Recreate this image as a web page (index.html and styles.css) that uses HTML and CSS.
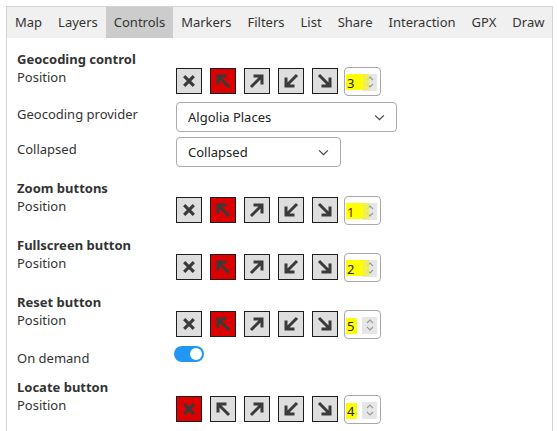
FILE: index.html
```html
<!DOCTYPE html>
<html lang="en">
<head>
<meta charset="utf-8">
<title>Map settings - Controls</title>
<link rel="stylesheet" href="styles.css">
</head>
<body>
<svg class="defs" width="0" height="0">
    <symbol id="i-none" viewBox="0 0 16 16"><path d="M2.5 2.5l11 11M13.5 2.5l-11 11"/></symbol>
    <symbol id="i-tl" viewBox="0 0 16 16"><path d="M3 11.5V3h8.5M3 3l11 11"/></symbol>
    <symbol id="i-tr" viewBox="0 0 16 16"><path d="M4.5 3H13v8.5M13 3L2 14"/></symbol>
    <symbol id="i-bl" viewBox="0 0 16 16"><path d="M3 4.5V13h8.5M3 13L14 2"/></symbol>
    <symbol id="i-br" viewBox="0 0 16 16"><path d="M13 4.5V13H4.5M13 13L2 2"/></symbol>
    <symbol id="i-spin" viewBox="0 0 10 16"><path d="M2 6l3-3 3 3M2 10l3 3 3-3"/></symbol>
    <symbol id="i-caret" viewBox="0 0 12 8"><path d="M1 1.5l5 5 5-5"/></symbol>
</svg>

<div class="tabs">
    <nav class="tab-bar">
        <a href="#">Map</a>
        <a href="#">Layers</a>
        <a href="#" class="active">Controls</a>
        <a href="#">Markers</a>
        <a href="#">Filters</a>
        <a href="#">List</a>
        <a href="#">Share</a>
        <a href="#">Interaction</a>
        <a href="#">GPX</a>
        <a href="#">Draw</a>
    </nav>

    <div class="panel">
        <div class="group first">
            <div class="group-title">Geocoding control</div>
            <div class="row">
                <span class="label">Position</span>
                <div class="pos">
                    <button class="pos-btn"><svg class="x"><use href="#i-none"/></svg></button>
                    <button class="pos-btn on"><svg><use href="#i-tl"/></svg></button>
                    <button class="pos-btn"><svg><use href="#i-tr"/></svg></button>
                    <button class="pos-btn"><svg><use href="#i-bl"/></svg></button>
                    <button class="pos-btn"><svg><use href="#i-br"/></svg></button>
                    <div class="num wide"><span class="mark"></span><span class="val">3</span><span class="spin"><svg><use href="#i-spin"/></svg></span></div>
                </div>
            </div>
        </div>

        <div class="row select-row">
            <span class="label">Geocoding provider</span>
            <div class="select big">Algolia Places <svg><use href="#i-caret"/></svg></div>
        </div>
        <div class="row select-row">
            <span class="label">Collapsed</span>
            <div class="select small">Collapsed <svg><use href="#i-caret"/></svg></div>
        </div>

        <div class="group">
            <div class="group-title">Zoom buttons</div>
            <div class="row">
                <span class="label">Position</span>
                <div class="pos">
                    <button class="pos-btn"><svg class="x"><use href="#i-none"/></svg></button>
                    <button class="pos-btn on"><svg><use href="#i-tl"/></svg></button>
                    <button class="pos-btn"><svg><use href="#i-tr"/></svg></button>
                    <button class="pos-btn"><svg><use href="#i-bl"/></svg></button>
                    <button class="pos-btn"><svg><use href="#i-br"/></svg></button>
                    <div class="num wide"><span class="mark"></span><span class="val red">1</span><span class="spin"><svg><use href="#i-spin"/></svg></span></div>
                </div>
            </div>
        </div>

        <div class="group">
            <div class="group-title">Fullscreen button</div>
            <div class="row">
                <span class="label">Position</span>
                <div class="pos">
                    <button class="pos-btn"><svg class="x"><use href="#i-none"/></svg></button>
                    <button class="pos-btn on"><svg><use href="#i-tl"/></svg></button>
                    <button class="pos-btn"><svg><use href="#i-tr"/></svg></button>
                    <button class="pos-btn"><svg><use href="#i-bl"/></svg></button>
                    <button class="pos-btn"><svg><use href="#i-br"/></svg></button>
                    <div class="num wide"><span class="mark"></span><span class="val">2</span><span class="spin"><svg><use href="#i-spin"/></svg></span></div>
                </div>
            </div>
        </div>

        <div class="group">
            <div class="group-title">Reset button</div>
            <div class="row">
                <span class="label">Position</span>
                <div class="pos">
                    <button class="pos-btn"><svg class="x"><use href="#i-none"/></svg></button>
                    <button class="pos-btn on"><svg><use href="#i-tl"/></svg></button>
                    <button class="pos-btn"><svg><use href="#i-tr"/></svg></button>
                    <button class="pos-btn"><svg><use href="#i-bl"/></svg></button>
                    <button class="pos-btn"><svg><use href="#i-br"/></svg></button>
                    <div class="num"><span class="mark"></span><span class="val">5</span><span class="spin"><svg><use href="#i-spin"/></svg></span></div>
                </div>
            </div>
        </div>

        <div class="row toggle-row">
            <span class="label">On demand</span>
            <span class="toggle"><span class="knob"></span></span>
        </div>

        <div class="group">
            <div class="group-title">Locate button</div>
            <div class="row">
                <span class="label">Position</span>
                <div class="pos">
                    <button class="pos-btn on"><svg class="x"><use href="#i-none"/></svg></button>
                    <button class="pos-btn"><svg><use href="#i-tl"/></svg></button>
                    <button class="pos-btn"><svg><use href="#i-tr"/></svg></button>
                    <button class="pos-btn"><svg><use href="#i-bl"/></svg></button>
                    <button class="pos-btn"><svg><use href="#i-br"/></svg></button>
                    <div class="num"><span class="mark"></span><span class="val">4</span><span class="spin"><svg><use href="#i-spin"/></svg></span></div>
                </div>
            </div>
        </div>
    </div>
</div>
</body>
</html>
```

FILE: styles.css
```css
body {
    margin: 0;
    font-family: "Noto Sans", "Open Sans", sans-serif;
    font-size: 13px;
    color: #333;
    background: #fff;
}
.defs {
    position: absolute;
}
.tabs {
    margin: 6px 0 0 6px;
    width: 545px;
    height: 440px;
    border: 1px solid #d4d4d4;
    border-bottom: none;
}
.tab-bar {
    display: flex;
    background-color: #f0f0f0;
    height: 31px;
}
.tab-bar a {
    padding: 0 8px;
    line-height: 31px;
    color: #333;
    text-decoration: none;
}
.tab-bar a.active {
    background-color: #cccccc;
}
.panel {
    padding: 12px 10px;
}
.group {
    margin-top: 12px;
}
.group.first {
    margin-top: 0;
}
.toggle-row + .group {
    margin-top: 11px;
}
.group-title {
    font-weight: bold;
    line-height: 18px;
}
.row {
    display: flex;
    align-items: flex-start;
}
.label {
    width: 159px;
    line-height: 18px;
    flex-shrink: 0;
}
.pos {
    display: flex;
    align-items: center;
    height: 28px;
    margin-top: -1px;
}
.pos-btn {
    width: 26px;
    height: 26px;
    margin: 0 8px 0 0;
    padding: 0;
    border: 1px solid #1e1e1e;
    background-color: #dedede;
    display: flex;
    align-items: center;
    justify-content: center;
}
.pos-btn.on {
    background-color: #dd0000;
}
.pos-btn svg {
    width: 16px;
    height: 16px;
    fill: none;
    stroke: #3a3a3a;
    stroke-width: 3;
}
.pos-btn svg.x {
    width: 14px;
    height: 14px;
    stroke-width: 3.6;
}
.num {
    position: relative;
    box-sizing: border-box;
    width: 37px;
    height: 29px;
    margin-left: -2px;
    border: 1px solid #a8a8a8;
    border-radius: 4px;
}
.num .mark {
    position: absolute;
    left: 1px;
    top: 7px;
    width: 11px;
    height: 16px;
    background-color: #ffff00;
}
.num.wide .mark {
    width: 23px;
    top: 6px;
    background: linear-gradient(to right, #ffff00 17px, rgba(240, 240, 70, 0.85) 17px);
    z-index: 1;
}
.num .val {
    position: absolute;
    left: 2px;
    top: 6px;
    line-height: 18px;
    color: #222;
    z-index: 2;
}
.num .val.red {
    color: #7a1a00;
}
.num .spin {
    position: absolute;
    left: 17px;
    top: 6px;
    width: 15px;
    height: 17px;
    background-color: #e6e6e6;
    display: flex;
    align-items: center;
    justify-content: center;
}
.num .spin svg {
    width: 10px;
    height: 16px;
    fill: none;
    stroke: #9a9a9a;
    stroke-width: 1.2;
}
.select-row {
    margin-top: 7px;
}
.select-row + .select-row {
    margin-top: 5px;
}
.select-row .label {
    padding-top: 3px;
}
.select {
    box-sizing: border-box;
    height: 30px;
    border: 1px solid #ababab;
    border-radius: 4px;
    padding: 0 11px;
    display: flex;
    align-items: center;
    justify-content: space-between;
    color: #222;
}
.select.big {
    width: 221px;
}
.select.small {
    width: 165px;
}
.select svg {
    width: 11px;
    height: 7px;
    fill: none;
    stroke: #444;
    stroke-width: 1.4;
}
.toggle-row {
    margin-top: 8px;
}
.toggle-row .label {
    padding-top: 3px;
}
.toggle {
    display: flex;
    align-items: center;
    justify-content: flex-end;
    box-sizing: border-box;
    width: 30px;
    height: 16px;
    margin-left: -2px;
    padding-right: 2px;
    border-radius: 8px;
    background-color: #2196f3;
}
.toggle .knob {
    width: 12px;
    height: 12px;
    border-radius: 50%;
    background-color: #fff;
}
```
